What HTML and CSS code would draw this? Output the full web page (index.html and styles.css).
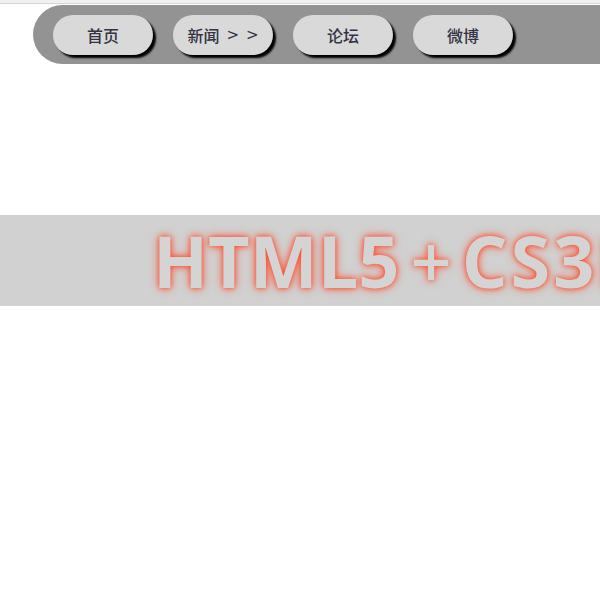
FILE: index.html
```html
<!DOCTYPE html>
<html>
<head>
<meta charset="utf-8">
<link rel="stylesheet" href="styles.css">
</head>
<body>
<div class="topstrip"></div>
<nav class="nav">
  <a class="btn">首页</a>
  <a class="btn"><span>新闻</span><span class="arrows">&gt; &gt;</span></a>
  <a class="btn">论坛</a>
  <a class="btn">微博</a>
</nav>
<div class="banner">
  <h1 class="title">HTML5<span class="plus">+</span><span class="tail">CS3D</span></h1>
</div>
</body>
</html>
```
FILE: styles.css
```css
html, body {
  margin: 0;
  padding: 0;
  background: #ffffff;
  overflow: hidden;
}
.topstrip {
  height: 3px;
  background: #f0f0f0;
  border-bottom: 1px solid #d4d4d4;
}
.nav {
  margin: 1px 0 0 33px;
  height: 59px;
  box-sizing: border-box;
  padding: 10px 20px 0;
  background: #939393;
  border-radius: 30px 0 0 30px;
  display: flex;
  gap: 20px;
}
.btn {
  width: 100px;
  height: 40px;
  flex: none;
  border-radius: 20px;
  background: #d9d9d9;
  box-shadow: 3px 3px 2px #000;
  display: flex;
  align-items: center;
  justify-content: center;
  gap: 7px;
  font-family: "Noto Sans CJK SC", sans-serif;
  font-size: 16px;
  font-weight: 500;
  color: #333344;
}
.arrows {
  word-spacing: 2px;
  font-family: "DejaVu Sans", sans-serif;
  font-size: 15px;
}
.banner {
  margin-top: 151px;
  height: 91px;
  background: #d1d1d1;
  overflow: hidden;
  white-space: nowrap;
}
.title {
  margin: 0 0 0 153px;
  font-family: "Open Sans", sans-serif;
  font-weight: 700;
  font-size: 72px;
  line-height: 91px;
  color: #d4d4d4;
  text-shadow: 0 0 10px #ff4a2a, 0 0 4px #ff6a50;
}
.plus {
  font-weight: 600;
  margin: 0 10px 0 11px;
}
.tail {
  letter-spacing: 3px;
}
```
